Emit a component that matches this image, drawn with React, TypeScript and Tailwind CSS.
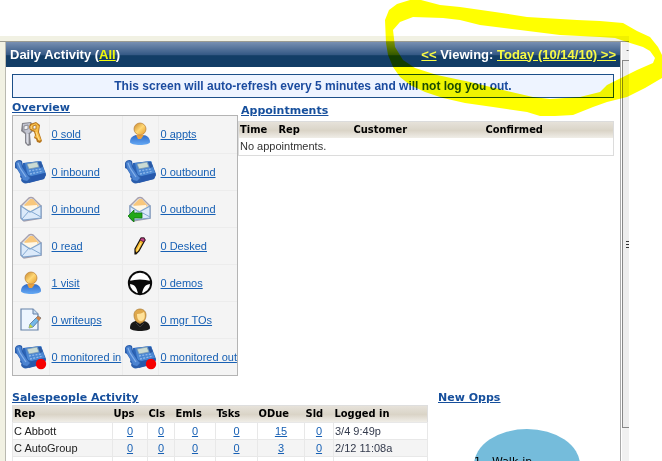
import type { ReactNode } from "react";

const heading = "font-['DejaVu_Sans',Verdana,sans-serif] text-[11px] leading-[14px] font-bold text-[#164f9c] underline";
const headRow =
  "h-4 bg-linear-to-b from-[#e6e2da] via-[#dad4c7] to-[#f3f1ec] text-left font-['DejaVu_Sans_Condensed',Tahoma,sans-serif] text-[11px] leading-4 text-black";
const link = "text-[#1760b4] underline";

function Keys() {
  return (
    <svg width="22" height="26" viewBox="0 0 22 26" aria-hidden="true">
      <path d="M2 2l9-1 2 3v6l-3 3 1 11-3 1-3-3V13L1 10z" fill="#85858c" />
      <path d="M3 3l7-1 2 3-1 5-3 3v10l-2-2V12L3 9z" fill="#c3c5d0" />
      <path d="M4 5l4-1v4l-4 1z" fill="#f4f4f4" stroke="#777985" strokeWidth=".8" />
      <path d="M8 13v10" stroke="#f4f5fa" />
      <path d="M10 3l6-2 4 3-1 7 3 9-2 2-3-1-1-3-2-1 1-3-1-3-4-2-1-3z" fill="#b7761d" />
      <path d="M11 4l5-2 3 3-1 6 3 8-2 1-2-3-2-1 1-2-1-4-4-2z" fill="#f7bd48" />
      <path d="M13 5l3-1v4l-3 0z" fill="#f4f4f4" stroke="#a86a16" strokeWidth=".8" />
      <path d="M16 11l3 8M11 5l0 3" stroke="#ffe08c" />
    </svg>
  );
}

function Phone({ recording = false }: { recording?: boolean }) {
  return (
    <svg width="33" height="26" viewBox="0 0 33 26" aria-hidden="true">
      <path d="M9 4L27 2l5 13-2 5-17 4-7-6z" fill="#2c64b6" />
      <path d="M11 4l16-2 4 12-17 4z" fill="#4a86d2" />
      <path d="M13 5l10-2 2 5-10 2z" fill="#cbdbd3" stroke="#7997ae" strokeWidth=".7" />
      <path d="M24 3l3 0 2 5-3 1z" fill="#2b59a4" />
      <path d="M15 12l12-2M16 15l13-3" stroke="#8eb9eb" strokeWidth="1.3" strokeDasharray="2 1.3" />
      <path d="M14 18l17-4 1 2-2 4-15 4z" fill="#2759ac" />
      <path d="M1 4c1-3 5-4 7-2l1 5 5 9 3 1c1 3 0 6-3 7-3 1-6 0-7-3l1-3-5-8-2-1z" fill="#2a5dab" />
      <path d="M2 4c1-2 4-2 5-1l1 5 6 9 2 2-3 3-4-1-1-3-5-9z" fill="#4b83d1" />
      <path d="M4 4l2 5 6 9" fill="none" stroke="#87b3ea" strokeWidth="1.2" />
      {recording && <circle cx="27" cy="20" r="5.2" fill="#f60000" />}
    </svg>
  );
}

function Mail({ reply = false }: { reply?: boolean }) {
  return (
    <svg width="24" height="26" viewBox="0 0 24 26" aria-hidden="true">
      <path d="M2 10L10 2q2-1 4 0l8 8v12L5 25l-3-3z" fill="#e6edf7" stroke="#a7a0ac" strokeWidth="1.5" />
      <path d="M5 9l6-6h3l6 7-8 6z" fill="#f8c77c" />
      <path d="M4 10l14-1 1 3-7 5-8-5z" fill="#fff7e6" />
      <path d="M2 10l9 6 11-6v12L4 24l-2-2z" fill="#dceafa" stroke="#80a3cb" strokeWidth="1.2" />
      <path d="M3 23l7-8 3 1 9 5" fill="none" stroke="#83a9d2" />
      {reply && <path d="M0 20l6-6v3h8v5H6v4z" fill="#21a819" stroke="#117610" strokeWidth=".8" />}
    </svg>
  );
}

function Person() {
  return (
    <svg width="22" height="24" viewBox="0 0 22 24" aria-hidden="true">
      <defs>
        <linearGradient id="face" x2="1" y2="1">
          <stop stopColor="#c78327" />
          <stop offset=".5" stopColor="#ffd875" />
          <stop offset="1" stopColor="#e59524" />
        </linearGradient>
        <linearGradient id="shirt" x2="0" y2="1">
          <stop stopColor="#2d69c9" />
          <stop offset="1" stopColor="#65a9f4" />
        </linearGradient>
      </defs>
      <path d="M1 20c0-5 4-7 7-7h6c4 0 7 3 7 7 0 4-20 4-20 0z" fill="url(#shirt)" />
      <path d="M7 13h8l-3 4H9z" fill="#e9a140" />
      <circle cx="11" cy="7" r="6" fill="url(#face)" stroke="#b77c32" strokeWidth=".7" />
    </svg>
  );
}

function Manager() {
  return (
    <svg width="22" height="24" viewBox="0 0 22 24" aria-hidden="true">
      <path d="M1 20c0-5 3-7 7-7h6c4 0 7 3 7 7 0 4-20 4-20 0z" fill="#191919" />
      <path d="M7 12h8l-4 4z" fill="#d99b43" />
      <path d="M5 7c0-8 12-8 12 0 0 5-3 8-6 8S5 12 5 7z" fill="#dfa84c" stroke="#a97b35" strokeWidth=".7" />
      <path d="M8 6c3 0 5-1 7-2 2 5 0 9-3 9S8 10 8 6z" fill="#ffe29a" />
      <path d="M7 15l4 4 4-4" fill="none" stroke="#444" strokeWidth=".8" />
    </svg>
  );
}

function Pencil() {
  return (
    <svg width="12" height="18" viewBox="0 0 12 18" aria-hidden="true">
      <path d="M7 1h3l1 2-6 11-3 3H1v-5z" fill="#f6b62b" stroke="#17120d" strokeWidth="1.2" />
      <path d="M7 1h3l1 2-1 2-4-2z" fill="#c24388" stroke="#451531" strokeWidth=".8" />
      <path d="M7 6l-4 8" stroke="#ffed91" />
      <path d="M1 14l2 2-2 1z" fill="#111" />
    </svg>
  );
}

function Wheel() {
  return (
    <svg width="26" height="26" viewBox="0 0 26 26" aria-hidden="true">
      <circle cx="13" cy="13" r="11.2" fill="#fff" stroke="#0a0a0a" strokeWidth="1.9" />
      <path d="M2 11q11-3 22 0v3c-6 0-8 4-9 10h-4c-1-6-3-10-9-10z" fill="#090909" />
    </svg>
  );
}

function Writeup() {
  return (
    <svg width="23" height="25" viewBox="0 0 23 25" aria-hidden="true">
      <path d="M2 2h12l5 5v16H2z" fill="#edf5ff" stroke="#6481a8" strokeWidth="1.2" />
      <path d="M14 2v5h5" fill="#c7dbef" stroke="#6481a8" />
      <path d="M11 17l8-8 3 2-8 9-4 1z" fill="#74b8e8" stroke="#486e97" strokeWidth=".8" />
      <path d="M17 11l2-2 3 2-2 3z" fill="#d08348" />
      <path d="M11 17l3 3-4 1z" fill="#c7d640" />
    </svg>
  );
}

type Stat = { icon: ReactNode; label: string };

const overview: [Stat, Stat][] = [
  [{ icon: <Keys />, label: "0 sold" }, { icon: <Person />, label: "0 appts" }],
  [{ icon: <Phone />, label: "0 inbound" }, { icon: <Phone />, label: "0 outbound" }],
  [{ icon: <Mail />, label: "0 inbound" }, { icon: <Mail reply />, label: "0 outbound" }],
  [{ icon: <Mail />, label: "0 read" }, { icon: <Pencil />, label: "0 Desked" }],
  [{ icon: <Person />, label: "1 visit" }, { icon: <Wheel />, label: "0 demos" }],
  [{ icon: <Writeup />, label: "0 writeups" }, { icon: <Manager />, label: "0 mgr TOs" }],
  [{ icon: <Phone recording />, label: "0 monitored in" }, { icon: <Phone recording />, label: "0 monitored out" }],
];

const salespeople = [
  { name: "C Abbott", counts: [0, 0, 0, 0, 15, 0], login: "3/4 9:49p" },
  { name: "C AutoGroup", counts: [0, 0, 0, 0, 3, 0], login: "2/12 11:08a" },
];

function Overview() {
  return (
    <section className="w-[226px] shrink-0">
      <h2 className={heading}><a href="#overview">Overview</a></h2>
      <div className="border border-[#b4b4b4] bg-[#f4f4f4]">
        <table className="w-full table-fixed border-collapse">
          <colgroup>
            <col className="w-9" />
            <col className="w-[73px]" />
            <col className="w-9" />
            <col />
          </colgroup>
          <tbody>
            {overview.map((row, i) => (
              <tr key={i} className="h-[37px] border-t border-[#ececec] first:border-t-0">
                {row.map((s, j) => [
                  <td key={`i${j}`} className="border-r border-[#ececec] p-0">
                    <span className="flex justify-center">{s.icon}</span>
                  </td>,
                  <td key={`l${j}`} className="border-r border-[#ececec] p-0 pl-[2px] whitespace-nowrap last:border-r-0">
                    <a href="#stat" className={link}>{s.label}</a>
                  </td>,
                ])}
              </tr>
            ))}
          </tbody>
        </table>
      </div>
    </section>
  );
}

function Appointments() {
  return (
    <section className="min-w-0 flex-1 pt-[3px]">
      <h2 className={`${heading} pl-[3px]`}><a href="#appointments">Appointments</a></h2>
      <table className="mt-[3px] w-full table-fixed border-collapse border border-[#dcdcdc]">
        <thead>
          <tr className={headRow}>
            <th className="w-[39px] p-0 pl-px">Time</th>
            <th className="w-[75px] p-0 pl-px">Rep</th>
            <th className="w-[132px] p-0 pl-px">Customer</th>
            <th className="p-0 pl-px">Confirmed</th>
          </tr>
        </thead>
        <tbody>
          <tr className="h-[17px]">
            <td colSpan={4} className="p-0 pl-px text-[#333]">No appointments.</td>
          </tr>
        </tbody>
      </table>
    </section>
  );
}

function Salespeople() {
  return (
    <section className="w-[416px] shrink-0">
      <h2 className={heading}><a href="#salespeople">Salespeople Activity</a></h2>
      <table className="w-full table-fixed border-collapse border border-[#dedede]">
        <thead>
          <tr className={headRow}>
            <th className="w-[100px] p-0 pl-px">Rep</th>
            <th className="w-[35px] p-0 pl-px">Ups</th>
            <th className="w-[27px] p-0 pl-px">Cls</th>
            <th className="w-[41px] p-0 pl-px">Emls</th>
            <th className="w-[42px] p-0 pl-px">Tsks</th>
            <th className="w-[47px] p-0 pl-px">ODue</th>
            <th className="w-[29px] p-0 pl-px">Sld</th>
            <th className="p-0 pl-px">Logged in</th>
          </tr>
        </thead>
        <tbody>
          {salespeople.map((p) => (
            <tr key={p.name} className="h-[17px] even:bg-[#f4f4f4]">
              <td className="border border-[#e8e8e8] p-0 pl-px text-[#222]">{p.name}</td>
              {p.counts.map((n, i) => (
                <td key={i} className="border border-[#e8e8e8] p-0 text-center">
                  <a href="#count" className={link}>{n}</a>
                </td>
              ))}
              <td className="border border-[#e8e8e8] p-0 pl-px text-[#333a4c]">{p.login}</td>
            </tr>
          ))}
          <tr className="h-[17px]">
            {Array.from({ length: 8 }, (_, i) => (
              <td key={i} className="border border-[#e8e8e8] p-0" />
            ))}
          </tr>
        </tbody>
      </table>
    </section>
  );
}

function NewOpps() {
  return (
    <section className="min-w-0 flex-1">
      <h2 className={heading}><a href="#opps">New Opps</a></h2>
      <div className="mt-6 ml-9 h-[72px] w-[106px] rounded-[50%] bg-[#75bcdb] pt-[26px] font-['DejaVu_Sans',sans-serif] whitespace-nowrap text-black">
        1 - Walk-in
      </div>
    </section>
  );
}

function Scrollbar() {
  return (
    <div className="flex w-[9px] shrink-0 border-l border-[#aaa] bg-[#f1f1f1]">
      <div className="w-px bg-white" />
      <div className="flex flex-1 flex-col">
        <div className="h-[18px] pt-1 text-right text-[8px] leading-[8px] text-black">-</div>
        <div className="flex h-[368px] flex-col items-end justify-center gap-[2px] border border-r-0 border-[#888] bg-[#ededed]">
          <i className="h-px w-[3px] bg-[#333]" />
          <i className="h-px w-[3px] bg-[#333]" />
          <i className="h-px w-[3px] bg-[#333]" />
        </div>
      </div>
    </div>
  );
}

export default function App() {
  return (
    <div className="relative h-screen overflow-hidden bg-white pt-9 font-['Liberation_Sans',Arial,sans-serif] text-[11px] leading-[14px]">
      <div className="mr-[33px] flex h-full flex-col">
        <div className="h-[6px] shrink-0 border-b border-[#9a9b92] bg-[#f1f1e3]" />
        <div className="flex min-h-0 flex-1">
          <div className="w-[6px] shrink-0 border-r border-[#b9b9b0] bg-[#f1f1e3]" />
          <main className="min-w-0 flex-1">
            <header className="flex h-[25px] items-center justify-between bg-linear-to-b from-[#7890b2] from-0% via-[#365a86] via-50% to-[#123d66] to-55% px-1 text-[13px] font-bold text-white">
              <h1>Daily Activity (<a href="#all" className="text-[#f2fa0a] underline">All</a>)</h1>
              <nav>
                <a href="#previous" className="text-[#f8fa45] underline">&lt;&lt;</a> Viewing:{" "}
                <a href="#today" className="text-[#f8fa45] underline">Today (10/14/10) &gt;&gt;</a>
              </nav>
            </header>
            <div className="px-[6px] pt-[7px]">
              <p className="h-6 border border-[#1c4f88] bg-[#eef4ff] text-center text-xs leading-[22px] font-bold text-[#1b4b9f]">
                This screen will auto-refresh every 5 minutes and will not log you out.
              </p>
              <div className="flex pt-[3px]">
                <Overview />
                <Appointments />
              </div>
              <div className="flex gap-[10px] pt-[15px]">
                <Salespeople />
                <NewOpps />
              </div>
            </div>
          </main>
          <Scrollbar />
        </div>
      </div>
      <svg
        className="pointer-events-none absolute top-0 right-0 mix-blend-multiply"
        width="277"
        height="120"
        viewBox="385 0 277 120"
        aria-hidden="true"
      >
        <path
          fill="#ffff00"
          fillRule="evenodd"
          d="M385 20L389 10 397 4 410 0H421L440 5 460 7 495 12 527 17 577 20 600 21 623 23 637 31 650 37 658 47 662 55V78L645 88 627 97 607 102 593 107 573 115 555 116 540 116 527 112 493 107 465 103 443 98 425 92 410 85 400 77 393 67 388 55 386 43zM393 30L395 47 403 60 415 68 437 75 470 82 503 90 533 97 550 99 580 97 600 92 607 85 617 80 637 70 653 63 655 58 650 51 643 47 627 42 615 38 600 37 560 35 520 30 480 25 460 20 443 18 413 17 400 22z"
        />
      </svg>
    </div>
  );
}
